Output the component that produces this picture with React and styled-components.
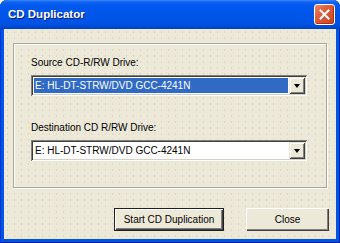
import React from "react";
import styled, { createGlobalStyle } from "styled-components";

const GlobalStyle = createGlobalStyle`
  html, body { margin: 0; padding: 0; background: #ffffff; }
  body { font-family: "Liberation Sans", Arial, sans-serif; }
  * { box-sizing: border-box; }
`;

const Window = styled.div`
  width: 340px;
  height: 243px;
  display: flex;
  flex-direction: column;
  background: #0055e5;
  border-radius: 7px 7px 0 0;
  box-shadow: inset 1px 0 0 #0831d9, inset -1px 0 0 #001ea0, inset 0 -1px 0 #001ea0;
  overflow: hidden;
`;

const TitleBar = styled.div`
  height: 29px;
  flex: none;
  display: flex;
  align-items: center;
  justify-content: space-between;
  padding: 0 5px 1px 8px;
  background: linear-gradient(
    to bottom,
    #3d8ff8 0px,
    #1f6ff5 1px,
    #0a5ff0 3px,
    #0058ee 6px,
    #0055e8 16px,
    #0052e2 24px,
    #0046cc 28px,
    #003cb8 29px
  );
`;

const Title = styled.span`
  color: #ffffff;
  font-family: "Liberation Sans", Arial, sans-serif;
  font-weight: bold;
  font-size: 11.5px;
  text-shadow: 1px 1px 0 #0a1e80;
`;

const CloseButton = styled.div`
  width: 21px;
  height: 21px;
  border: 1px solid #ffffff;
  border-radius: 3px;
  background: linear-gradient(135deg, #ee8a68 0%, #e0603e 35%, #cc4420 100%);
  display: flex;
  align-items: center;
  justify-content: center;
  box-shadow: inset -1px -1px 0 #b03010;
`;

const Body = styled.div`
  flex: 1;
  margin: 0 4px 4px 4px;
  background-color: #ece9d8;
  background-image: radial-gradient(circle, rgba(226, 176, 172, 0.4) 0.6px, transparent 0.9px);
  background-size: 7px 6px;
  display: flex;
  flex-direction: column;
  padding: 14px 7px 8px 9px;
`;

const GroupBox = styled.div`
  width: 314px;
  height: 145px;
  border: 1px solid #aca899;
  box-shadow: inset 1px 1px 0 #ffffff, 1px 1px 0 #ffffff;
  padding: 12px 19px 0 17px;
  display: flex;
  flex-direction: column;
`;

const Label = styled.div`
  font-size: 10px;
  line-height: 13px;
  height: 13px;
  color: #000000;
  margin-bottom: 6px;
  margin-top: ${(p) => p.$offset || 0}px;
  white-space: nowrap;
`;

const Combo = styled.div`
  height: 21px;
  display: flex;
  align-items: stretch;
  background: #ffffff;
  box-shadow: inset 1px 1px 0 #808080, inset -1px -1px 0 #ffffff,
    inset 2px 2px 0 #404040, inset -2px -2px 0 #d4d0c8;
  padding: 2px;
`;

const ComboValue = styled.div`
  flex: 1;
  margin: 1px;
  padding-left: 1px;
  font-size: 10px;
  line-height: 15px;
  color: ${(p) => (p.$selected ? "#ffffff" : "#000000")};
  background: ${(p) => (p.$selected ? "#316ac5" : "transparent")};
  white-space: nowrap;
  overflow: hidden;
`;

const ComboButton = styled.div`
  width: 16px;
  flex: none;
  background: #ece9d8;
  display: flex;
  align-items: center;
  justify-content: center;
  box-shadow: inset 1px 1px 0 #ece9d8, inset -1px -1px 0 #404040,
    inset 2px 2px 0 #ffffff, inset -2px -2px 0 #808080;
`;

const Arrow = styled.div`
  width: 0;
  height: 0;
  border-left: 3.5px solid transparent;
  border-right: 3.5px solid transparent;
  border-top: 4px solid #000000;
  margin-top: 1px;
`;

const ButtonRow = styled.div`
  margin-top: auto;
  display: flex;
  justify-content: flex-end;
  gap: 22px;
`;

const Button = styled.div`
  width: ${(p) => p.$width}px;
  height: 23px;
  display: flex;
  align-items: center;
  justify-content: center;
  font-size: 10px;
  color: #000000;
  background: #ece9d8;
  box-shadow: ${(p) =>
    p.$default
      ? "inset 0 0 0 1px #202020, inset 1px 1px 0 1px #ffffff, inset -2px -2px 0 #404040, inset -3px -3px 0 #808080"
      : "inset 1px 1px 0 #ffffff, inset -1px -1px 0 #404040, inset -2px -2px 0 #808080"};
  white-space: nowrap;
`;

function ComboBox({ value, selected }) {
  return (
    <Combo>
      <ComboValue $selected={selected}>{value}</ComboValue>
      <ComboButton>
        <Arrow />
      </ComboButton>
    </Combo>
  );
}

function CloseIcon() {
  return (
    <svg width="11" height="11" viewBox="0 0 11 11">
      <path d="M1.5 1.5 L9.5 9.5 M9.5 1.5 L1.5 9.5" stroke="#ffffff" strokeWidth="2" strokeLinecap="square" />
    </svg>
  );
}

export default function App() {
  const drive = "E: HL-DT-STRW/DVD GCC-4241N";
  return (
    <>
      <GlobalStyle />
      <Window>
        <TitleBar>
          <Title>CD Duplicator</Title>
          <CloseButton>
            <CloseIcon />
          </CloseButton>
        </TitleBar>
        <Body>
          <GroupBox>
            <Label>Source CD-R/RW Drive:</Label>
            <ComboBox value={drive} selected />
            <Label $offset={25}>Destination CD R/RW Drive:</Label>
            <ComboBox value={drive} />
          </GroupBox>
          <ButtonRow>
            <Button $width={110} $default>Start CD Duplication</Button>
            <Button $width={83}>Close</Button>
          </ButtonRow>
        </Body>
      </Window>
    </>
  );
}
